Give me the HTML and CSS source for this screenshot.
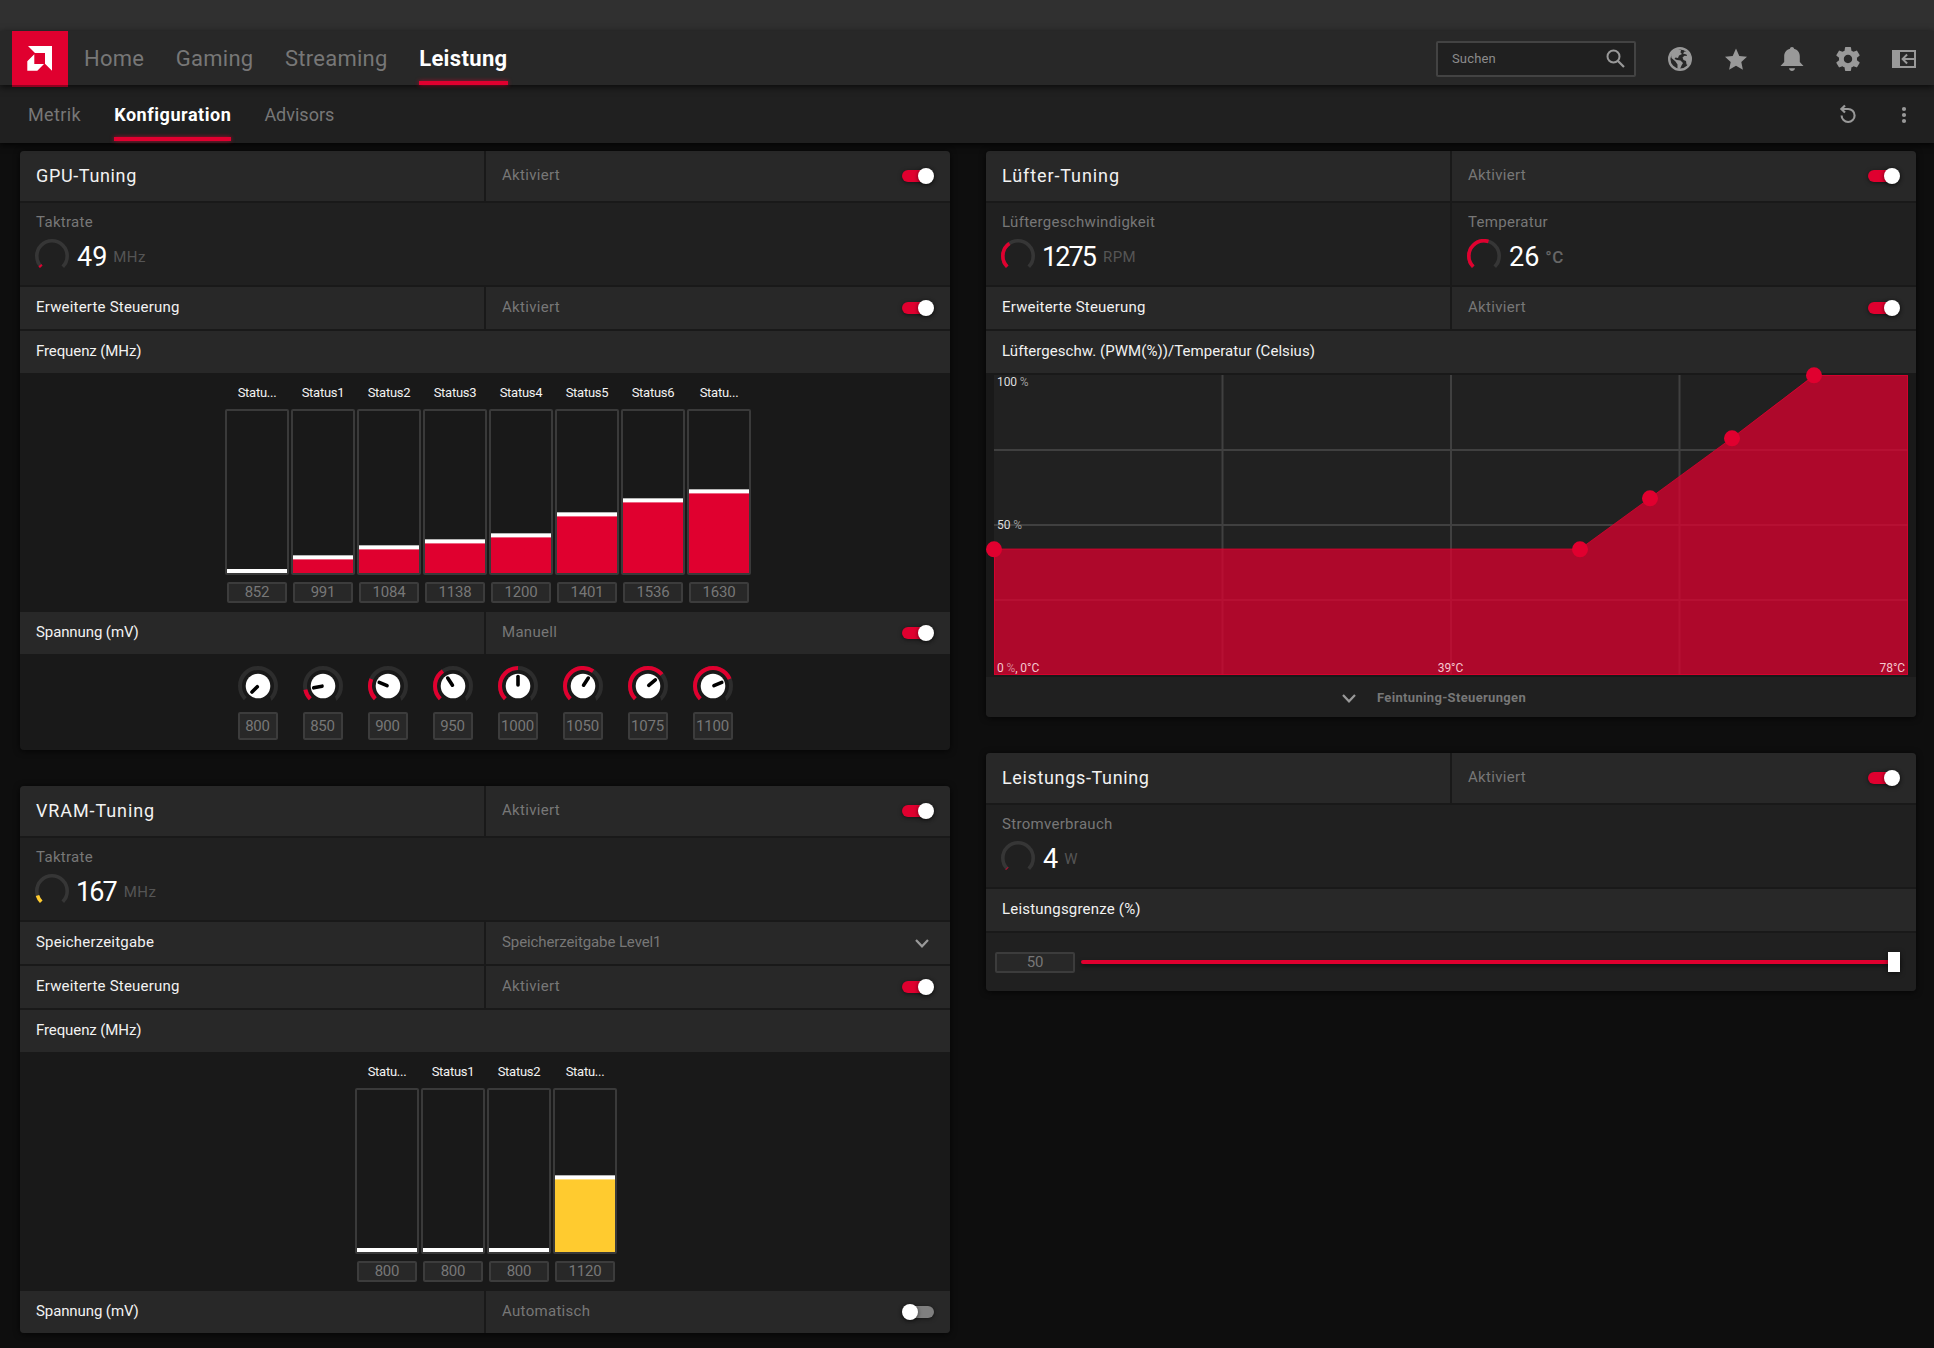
FILE: index.html
```
<!DOCTYPE html>
<html lang="de">
<head>
<meta charset="utf-8">
<title>Leistung – Konfiguration</title>
<link rel="stylesheet" href="styles.css">
</head>
<body>
<div class="titlebar"></div>

<header class="header">
  <svg class="logo" viewBox="0 0 56 56"><path d="M16 15H40V39.7L33 32.7V22H23ZM15.3 30.3L22.3 23.3V33H32L25.3 39.7H15.3Z"/></svg>
  <nav class="nav">
    <a>Home</a><a>Gaming</a><a>Streaming</a><a class="active">Leistung</a>
  </nav>
  <div class="search"><span>Suchen</span>
    <svg width="20" height="20" viewBox="0 0 20 20"><circle cx="7.5" cy="7.5" r="6" fill="none" stroke="#999" stroke-width="2"/><path d="M12 12L18 18" stroke="#999" stroke-width="2.2"/></svg>
  </div>
  <div class="icons">
    <svg viewBox="0 0 24 24"><circle cx="12" cy="12" r="10.8" fill="none" stroke="#999" stroke-width="2.4"/><path fill="#999" d="M4 5L9 2L13 3L12.500 5.500L14 7L11 8.500L10 11L7.500 10.500L6.500 12L9 13L12.500 13.500L15 16L13.500 18.500L12 22L9.500 21.500L9.500 17.500L7.500 14.500L3.500 11L3 8ZM15 6.500L16.500 4.500L19.500 5L22.500 9.500V14.500L20 18L18.500 17.500L18 14L15.500 13L14.500 10.500L16.500 8.700L19 9L18.500 7.500Z"/></svg>
    <svg viewBox="0 0 24 24"><path fill="#999" d="M12 1.500L15.300 8.900L23 9.700L17.300 15L18.900 22.800L12 18.800L5.100 22.800L6.700 15L1 9.700L8.700 8.900Z"/></svg>
    <svg viewBox="0 0 24 24"><path fill="#999" d="M12 0C13.200 0 14 .8 14 1.800C17.600 2.700 19.800 5.600 19.800 9.500V15L23.500 19H.5L4.200 15V9.500C4.200 5.600 6.400 2.700 10 1.800C10 .8 10.800 0 12 0ZM9 21.300H15C14.700 23 13.500 24 12 24C10.500 24 9.300 23 9 21.300Z"/></svg>
    <svg viewBox="2 2 20 20"><path fill="#999" d="M19.430 12.980c.040-.320.070-.640.070-.980s-.030-.660-.070-.980l2.110-1.650c.190-.150.240-.420.120-.640l-2-3.460c-.120-.220-.390-.300-.610-.220l-2.490 1c-.520-.400-1.080-.730-1.690-.980l-.380-2.650C14.460 2.180 14.250 2 14 2h-4c-.250 0-.460.180-.490.420l-.380 2.650c-.610.250-1.170.590-1.690.980l-2.490-1c-.230-.090-.490 0-.610.220l-2 3.460c-.130.220-.070.490.120.640l2.110 1.650c-.040.320-.070.650-.070.980s.030.660.070.980l-2.110 1.650c-.190.150-.240.420-.120.640l2 3.460c.120.220.390.300.610.220l2.490-1c.520.400 1.080.730 1.690.980l.380 2.650c.030.240.240.420.490.420h4c.250 0 .460-.180.490-.420l.380-2.650c.610-.250 1.170-.590 1.690-.980l2.490 1c.230.090.490 0 .610-.220l2-3.460c.120-.220.070-.490-.120-.640zM12 15.500c-1.930 0-3.500-1.570-3.500-3.500s1.570-3.500 3.500-3.500 3.500 1.570 3.500 3.500-1.570 3.500-3.500 3.500z"/></svg>
    <svg viewBox="0 0 24 24"><path fill="#999" d="M0 3H24V21H0ZM8 5V19H22V13H13L15.800 15.800L14.400 17.200L9.200 12L14.400 6.800L15.800 8.200L13 11H22V5Z" fill-rule="evenodd"/></svg>
  </div>
</header>

<div class="subbar">
  <nav class="subnav"><a>Metrik</a><a class="active">Konfiguration</a><a>Advisors</a></nav>
  <div class="subicons">
    <svg viewBox="0 0 24 24"><path d="M5.600 12.500A6.500 6.500 0 1 0 12 6H6" fill="none" stroke="#999" stroke-width="2.100"/><path d="M9 2.500L5.400 6L9 9.500" fill="none" stroke="#999" stroke-width="2.200"/></svg>
    <svg viewBox="0 0 24 24"><g fill="#999"><circle cx="12" cy="6" r="2.100"/><circle cx="12" cy="12" r="2.100"/><circle cx="12" cy="18" r="2.100"/></g></svg>
  </div>
</div>

<main class="columns">
  <div class="column">
    <section class="panel">
      <div class="row title"><div class="cell">GPU-Tuning</div><div class="cell state">Aktiviert<i class="toggle"></i></div></div>
      <div class="row metrics"><div class="metric">
        <div class="caption">Taktrate</div>
        <div class="reading"><svg class="gauge" viewBox="0 0 34 34"><circle class="ring" cx="17" cy="17" r="15.200" pathLength="360"/><circle class="arc" cx="17" cy="17" r="15.200" pathLength="360" stroke-dasharray="8 360"/></svg><b>49</b><small>MHz</small></div>
      </div></div>
      <div class="row"><div class="cell">Erweiterte Steuerung</div><div class="cell state">Aktiviert<i class="toggle"></i></div></div>
      <div class="row"><div class="cell tight">Frequenz (MHz)</div></div>
      <div class="bars eight">
        <div class="bar"><span>Statu...</span><div class="tank"><div class="fill empty"></div></div><div class="box">852</div></div>
        <div class="bar"><span>Status1</span><div class="tank"><div class="fill" style="height:18px"></div></div><div class="box">991</div></div>
        <div class="bar"><span>Status2</span><div class="tank"><div class="fill" style="height:28px"></div></div><div class="box">1084</div></div>
        <div class="bar"><span>Status3</span><div class="tank"><div class="fill" style="height:34px"></div></div><div class="box">1138</div></div>
        <div class="bar"><span>Status4</span><div class="tank"><div class="fill" style="height:40px"></div></div><div class="box">1200</div></div>
        <div class="bar"><span>Status5</span><div class="tank"><div class="fill" style="height:61px"></div></div><div class="box">1401</div></div>
        <div class="bar"><span>Status6</span><div class="tank"><div class="fill" style="height:75px"></div></div><div class="box">1536</div></div>
        <div class="bar"><span>Statu...</span><div class="tank"><div class="fill" style="height:84px"></div></div><div class="box">1630</div></div>
      </div>
      <div class="row flush"><div class="cell tight">Spannung (mV)</div><div class="cell state">Manuell<i class="toggle"></i></div></div>
      <div class="knobs">
        <div class="knob"><svg viewBox="-20 -20 40 40"><circle class="ring" r="18" pathLength="360"/><circle class="cap" r="12.300"/><path class="hand" transform="rotate(-135)" d="M0 -1V-8.500"/></svg><div class="box">800</div></div>
        <div class="knob"><svg viewBox="-20 -20 40 40"><circle class="ring" r="18" pathLength="360"/><circle class="arc" r="18" pathLength="360" stroke-dasharray="33.750 360"/><circle class="cap" r="12.300"/><path class="hand" transform="rotate(-101.250)" d="M0 -1V-9.500"/></svg><div class="box">850</div></div>
        <div class="knob"><svg viewBox="-20 -20 40 40"><circle class="ring" r="18" pathLength="360"/><circle class="arc" r="18" pathLength="360" stroke-dasharray="67.500 360"/><circle class="cap" r="12.300"/><path class="hand" transform="rotate(-67.500)" d="M0 -1V-9.500"/></svg><div class="box">900</div></div>
        <div class="knob"><svg viewBox="-20 -20 40 40"><circle class="ring" r="18" pathLength="360"/><circle class="arc" r="18" pathLength="360" stroke-dasharray="101.250 360"/><circle class="cap" r="12.300"/><path class="hand" transform="rotate(-33.750)" d="M0 -1V-9.500"/></svg><div class="box">950</div></div>
        <div class="knob"><svg viewBox="-20 -20 40 40"><circle class="ring" r="18" pathLength="360"/><circle class="arc" r="18" pathLength="360" stroke-dasharray="135 360"/><circle class="cap" r="12.300"/><path class="hand" d="M0 -1V-9.500"/></svg><div class="box">1000</div></div>
        <div class="knob"><svg viewBox="-20 -20 40 40"><circle class="ring" r="18" pathLength="360"/><circle class="arc" r="18" pathLength="360" stroke-dasharray="168.750 360"/><circle class="cap" r="12.300"/><path class="hand" transform="rotate(33.750)" d="M0 -1V-9.500"/></svg><div class="box">1050</div></div>
        <div class="knob"><svg viewBox="-20 -20 40 40"><circle class="ring" r="18" pathLength="360"/><circle class="arc" r="18" pathLength="360" stroke-dasharray="185.600 360"/><circle class="cap" r="12.300"/><path class="hand" transform="rotate(50.600)" d="M0 -1V-9.500"/></svg><div class="box">1075</div></div>
        <div class="knob"><svg viewBox="-20 -20 40 40"><circle class="ring" r="18" pathLength="360"/><circle class="arc" r="18" pathLength="360" stroke-dasharray="202.500 360"/><circle class="cap" r="12.300"/><path class="hand" transform="rotate(67.500)" d="M0 -1V-9.500"/></svg><div class="box">1100</div></div>
      </div>
    </section>

    <section class="panel vram">
      <div class="row title"><div class="cell wide">VRAM-Tuning</div><div class="cell state">Aktiviert<i class="toggle"></i></div></div>
      <div class="row metrics"><div class="metric">
        <div class="caption">Taktrate</div>
        <div class="reading"><svg class="gauge" viewBox="0 0 34 34"><circle class="ring" cx="17" cy="17" r="15.200" pathLength="360"/><circle class="arc" cx="17" cy="17" r="15.200" pathLength="360" stroke-dasharray="28 360"/></svg><b class="narrow">167</b><small>MHz</small></div>
      </div></div>
      <div class="row"><div class="cell">Speicherzeitgabe</div><div class="cell state tight">Speicherzeitgabe Level1<svg class="chevron select" viewBox="0 0 14 9"><path d="M1 1L7 7.300L13 1"/></svg></div></div>
      <div class="row"><div class="cell">Erweiterte Steuerung</div><div class="cell state">Aktiviert<i class="toggle"></i></div></div>
      <div class="row"><div class="cell tight">Frequenz (MHz)</div></div>
      <div class="bars four">
        <div class="bar"><span>Statu...</span><div class="tank"><div class="fill empty"></div></div><div class="box">800</div></div>
        <div class="bar"><span>Status1</span><div class="tank"><div class="fill empty"></div></div><div class="box">800</div></div>
        <div class="bar"><span>Status2</span><div class="tank"><div class="fill empty"></div></div><div class="box">800</div></div>
        <div class="bar"><span>Statu...</span><div class="tank"><div class="fill" style="height:77px"></div></div><div class="box">1120</div></div>
      </div>
      <div class="row flush"><div class="cell tight">Spannung (mV)</div><div class="cell state">Automatisch<i class="toggle off"></i></div></div>
    </section>
  </div>

  <div class="column">
    <section class="panel">
      <div class="row title"><div class="cell wide">Lüfter-Tuning</div><div class="cell state">Aktiviert<i class="toggle"></i></div></div>
      <div class="row metrics">
        <div class="metric"><div class="caption">Lüftergeschwindigkeit</div>
          <div class="reading"><svg class="gauge" viewBox="0 0 34 34"><circle class="ring" cx="17" cy="17" r="15.200" pathLength="360"/><circle class="arc" cx="17" cy="17" r="15.200" pathLength="360" stroke-dasharray="101 360"/></svg><b class="narrow">1275</b><small>RPM</small></div></div>
        <div class="metric"><div class="caption">Temperatur</div>
          <div class="reading"><svg class="gauge" viewBox="0 0 34 34"><circle class="ring" cx="17" cy="17" r="15.200" pathLength="360"/><circle class="arc" cx="17" cy="17" r="15.200" pathLength="360" stroke-dasharray="152 360"/></svg><b>26</b><small class="strong">°C</small></div></div>
      </div>
      <div class="row"><div class="cell">Erweiterte Steuerung</div><div class="cell state">Aktiviert<i class="toggle"></i></div></div>
      <div class="row"><div class="cell pwm">Lüftergeschw. (PWM(%))/Temperatur (Celsius)</div></div>
      <div class="chart">
        <svg viewBox="0 0 914 300">
          <rect width="914" height="300" fill="#212121"/>
          <path d="M228.500 0V300M457 0V300M685.500 0V300M0 75H914M0 150H914M0 225H914" stroke="#404040" stroke-width="2"/>
          <g class="axis">
            <text x="3" y="10.500">100 <tspan>%</tspan></text>
            <text x="3" y="153.500">50 <tspan>%</tspan></text>
          </g>
          <path d="M0 174H586L656 123L738 63L820 0H914V300H0Z" fill="#e0002f" fill-opacity=".74"/>
          <path d="M0 174H586L656 123L738 63L820 .5H913.500V299.500H.5V174" fill="none" stroke="#e0002f" stroke-opacity=".75"/>
          <g fill="#e0002f"><circle cx="0" cy="174.300" r="8"/><circle cx="586" cy="174.300" r="8"/><circle cx="656" cy="123.300" r="8"/><circle cx="738" cy="63.300" r="8"/><circle cx="820" cy=".3" r="8"/></g>
          <g class="axis hot">
            <text x="3" y="296.500">0 <tspan>%</tspan>, 0°C</text>
            <text x="456.500" y="296.500" text-anchor="middle">39°C</text>
            <text x="911" y="296.500" text-anchor="end">78°C</text>
          </g>
        </svg>
      </div>
      <div class="footer"><svg class="chevron" viewBox="0 0 14 9"><path d="M1 1L7 7.300L13 1"/></svg><span>Feintuning-Steuerungen</span></div>
    </section>

    <section class="panel">
      <div class="row title"><div class="cell">Leistungs-Tuning</div><div class="cell state">Aktiviert<i class="toggle"></i></div></div>
      <div class="row metrics"><div class="metric">
        <div class="caption">Stromverbrauch</div>
        <div class="reading"><svg class="gauge" viewBox="0 0 34 34"><circle class="ring" cx="17" cy="17" r="15.200" pathLength="360"/><circle class="arc" cx="17" cy="17" r="15.200" pathLength="360" stroke-dasharray="3 360"/></svg><b>4</b><small>W</small></div>
      </div></div>
      <div class="row"><div class="cell">Leistungsgrenze (%)</div></div>
      <div class="limit"><div class="box">50</div><div class="slider"><div class="thumb"></div></div></div>
    </section>
  </div>
</main>
</body>
</html>
```
FILE: styles.css
```
* { box-sizing: border-box; }
body {
  margin: 0;
  height: 1348px;
  overflow: hidden;
  background: #0e0e0e;
  color: #f2f2f2;
  font: 15px/20px Roboto, sans-serif;
}
svg { display: block; flex: none; }

.titlebar { height: 31px; background: #303030; }

.header {
  display: flex;
  align-items: center;
  height: 54px;
  padding: 0 18px 0 12px;
  background: #282828;
  box-shadow: 0 2px 7px rgba(0, 0, 0, .7);
  position: relative;
  z-index: 2;
}
.logo {
  width: 56px;
  height: 56px;
  align-self: flex-start;
  background: linear-gradient(#e0002f 54px, #90001f 54px);
  fill: #fff;
}
.nav, .subnav { display: flex; align-self: stretch; color: #777; }
.nav { gap: 31.6px; margin-left: 16px; font-size: 22px; line-height: 56px; letter-spacing: .25px; }
.nav a, .subnav a { display: block; }
.active {
  color: #fff;
  font-weight: 700;
  position: relative;
}
.nav .active { letter-spacing: .35px; }
.active::after {
  content: "";
  position: absolute;
  left: 0;
  right: 0;
  bottom: 0;
  height: 4px;
  background: #e0002f;
  box-shadow: 0 0 4px rgba(224, 0, 47, .7);
}
.search {
  display: flex;
  align-items: center;
  justify-content: space-between;
  width: 200px;
  height: 36px;
  margin: 2px 0 0 auto;
  padding: 0 8px 0 14px;
  border: 2px solid #434343;
  border-radius: 2px;
  background: #202020;
  color: #8c8c8c;
  font-size: 13px;
  letter-spacing: .15px;
}
.icons { display: flex; gap: 32px; margin: 2px 0 0 32px; }
.icons svg { width: 24px; height: 24px; }

.subbar {
  display: flex;
  align-items: center;
  justify-content: space-between;
  height: 58px;
  padding: 0 18px 0 28px;
  background: #202020;
  box-shadow: 0 2px 6px rgba(0, 0, 0, .8);
  position: relative;
  z-index: 1;
}
.subnav { gap: 33px; font-size: 18px; line-height: 60px; letter-spacing: .4px; }
.subnav .active { letter-spacing: .55px; }
.subnav a:last-child { letter-spacing: 0; }
.subnav .active::after { bottom: 2px; }
.subicons { display: flex; gap: 32px; padding-top: 2px; }
.subicons svg { width: 24px; height: 24px; }

.columns { display: flex; gap: 36px; padding: 8px 18px 0 20px; }
.column { display: flex; flex: 1; flex-direction: column; gap: 36px; }
.panel {
  --accent: #e0002f;
  border-radius: 4px;
  background: #191919;
  box-shadow: 0 1px 6px rgba(0, 0, 0, .7);
  overflow: hidden;
}
.vram { --accent: #ffcb2f; }

.row { display: flex; gap: 2px; height: 42px; margin-top: 2px; letter-spacing: .2px; }
.row.title { height: 50px; margin-top: 0; }
.row.flush { margin-top: 0; }
.cell {
  display: flex;
  flex: 1;
  align-items: center;
  padding: 0 16px 2px;
  background: #282828;
}
.title .cell:first-child { padding-bottom: 0; font-size: 18px; letter-spacing: .65px; }
.title .cell.wide:first-child { letter-spacing: .9px; }
.state { justify-content: space-between; color: #777; letter-spacing: .3px; }
.cell.tight { letter-spacing: -.1px; }
.cell.pwm { letter-spacing: .05px; }

.toggle {
  display: flex;
  justify-content: flex-end;
  align-items: center;
  width: 31px;
  height: 12px;
  margin: 2px 1px 0 0;
  border-radius: 6px;
  background: #e0002f;
  box-shadow: 0 1px 4px rgba(0, 0, 0, .5);
}
.toggle::after {
  content: "";
  flex: none;
  width: 16px;
  height: 16px;
  margin: 0 -1px;
  border-radius: 50%;
  background: #fff;
  box-shadow: 0 1px 4px rgba(0, 0, 0, .6);
}
.toggle.off { justify-content: flex-start; margin-right: 0; background: #7f7f7f; }

.row.metrics { height: 82px; }
.metric { flex: 1; padding: 10px 15px; background: #202020; }
.caption { padding-left: 1px; line-height: 19px; color: #777; letter-spacing: .3px; }
.reading { display: flex; align-items: center; margin-top: 7px; }
.reading b {
  margin-left: 8px;
  padding-top: 2px;
  color: #fff;
  font-size: 27px;
  line-height: 32px;
  font-weight: 400;
  letter-spacing: 0;
}
.reading b.narrow { margin-left: 7px; letter-spacing: -1.9px; }
.reading small { margin-left: 6px; padding-top: 2px; font-size: 15px; color: #555; letter-spacing: .4px; }
.reading b.narrow + small { margin-left: 8px; }
.reading small.strong { font-size: 17px; font-weight: 500; color: #666; }
.gauge { width: 34px; height: 34px; }
.ring, .arc { fill: none; stroke-width: 3.6px; transform: rotate(135deg); }
.gauge .ring, .gauge .arc { transform-origin: 17px 17px; }
.ring { stroke: #363636; stroke-dasharray: 270 360; }
.arc { stroke: var(--accent); }

.box {
  display: flex;
  align-items: center;
  justify-content: center;
  border: 2px solid #3c3c3c;
  border-radius: 2px;
  background: #282828;
  color: #777;
  letter-spacing: -.2px;
}

.bars { display: flex; justify-content: center; gap: 2px; height: 239px; padding-top: 10px; }
.bars.eight { padding-left: 6px; }
.bars.four { padding-left: 2px; }
.bar { display: flex; flex-direction: column; align-items: center; width: 64px; }
.bar span { height: 18px; line-height: 20px; font-size: 13px; letter-spacing: -.25px; }
.tank {
  display: flex;
  align-items: flex-end;
  width: 64px;
  height: 166px;
  margin: 8px 0 7px;
  border: 2px solid #3a3a3a;
  border-radius: 2px;
}
/* white handle with softened edges on top of the level */
.fill { flex: 1; background: linear-gradient(#b4b4b4 1px, #fff 1px 4px, color-mix(in srgb, #fff 40%, var(--accent)) 4px 5px, var(--accent) 5px); }
.fill.empty { height: 4px; background: #fff; }
.bar .box { width: 60px; height: 21px; line-height: 16px; padding-bottom: 1px; }

.knobs { display: flex; justify-content: center; gap: 25px; height: 96px; padding-top: 12px; }
.knob svg { width: 40px; height: 40px; margin-bottom: 6px; }
.knob .ring, .knob .arc { stroke-width: 4px; }
.knob .ring { stroke: #2d2d2d; }
.knob .box { width: 40px; height: 28px; }
.cap { fill: #fff; }
.hand { fill: none; stroke: #000; stroke-width: 3.6px; stroke-linecap: round; }

.chevron { width: 14px; height: 9px; fill: none; stroke: #999; stroke-width: 2.2px; }
.chevron.select { margin: 3px 5px 0 0; }

.chart { height: 304px; padding: 2px 8px; }
.chart svg { width: 914px; height: 300px; overflow: visible; }
.axis { font-size: 12px; fill: #ddd; letter-spacing: -.1px; }
.axis tspan { fill: #999; }
.axis.hot { fill: #f5c6cf; }
.axis.hot tspan { fill: #d77f90; }
.footer {
  display: flex;
  align-items: center;
  height: 40px;
  padding: 2px 0 0 356px;
  gap: 21px;
  background: #202020;
  color: #777;
  font-size: 13px;
  font-weight: 700;
  letter-spacing: .33px;
}

.limit { display: flex; align-items: center; gap: 6px; height: 58px; margin-top: 2px; padding: 0 16px 0 9px; background: #202020; }
.limit .box { width: 80px; height: 21px; padding-bottom: 1px; }
.slider {
  display: flex;
  flex: 1;
  align-items: center;
  justify-content: flex-end;
  height: 4px;
  border-radius: 2px;
  background: #e0002f;
  box-shadow: 0 2px 4px rgba(0, 0, 0, .5);
}
.thumb { width: 12px; height: 20px; background: #fff; box-shadow: 0 1px 5px rgba(0, 0, 0, .6); }
```
